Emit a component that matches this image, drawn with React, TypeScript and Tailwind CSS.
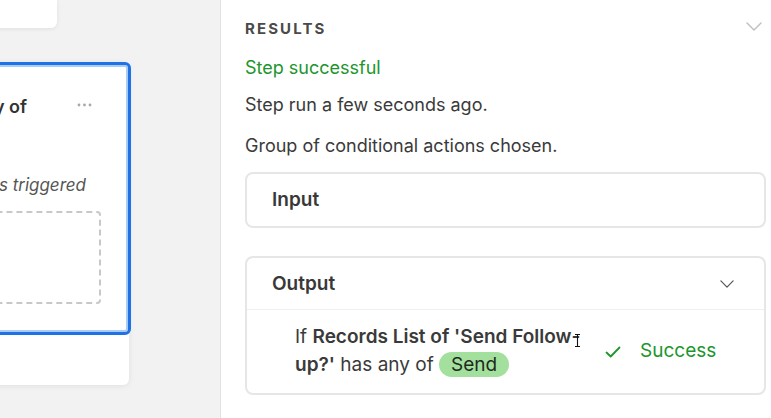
import React from 'react';

const Chevron = ({ className }: { className?: string }) => (
    <svg viewBox="0 0 16 9" className={className} fill="none" stroke="currentColor" strokeWidth={1.4} strokeLinecap="round" strokeLinejoin="round">
        <path d="M1 1l7 7 7-7" />
    </svg>
);

const Check = () => (
    <svg viewBox="0 0 16 12" className="w-[16px] h-[12px] text-[#20952d]" fill="none" stroke="currentColor" strokeWidth={1.8} strokeLinecap="round" strokeLinejoin="round">
        <path d="M1.5 6.5l4.2 4L14.5 1.5" />
    </svg>
);

const Dots = () => (
    <svg viewBox="0 0 15 4" className="w-[15px] h-[4px]">
        <circle cx="2" cy="2" r="1.4" fill="#a8a8a8" />
        <circle cx="7.5" cy="2" r="1.4" fill="#a8a8a8" />
        <circle cx="13" cy="2" r="1.4" fill="#a8a8a8" />
    </svg>
);

// Canvas side (card is mostly scrolled off to the left)
const Canvas = () => (
    <div className="w-[220px] shrink-0 bg-[#f2f2f2] overflow-hidden">
        <div className="ml-[-200px] w-[257px] h-[28px] bg-white rounded-br-[6px] shadow-[0_1px_4px_rgba(0,0,0,0.08)]" />

        <div className="ml-[-200px] mt-[34px] w-[329px] rounded-[6px] bg-white shadow-[0_1px_6px_rgba(0,0,0,0.08)]">
            <div className="w-[331px] h-[273px] rounded-[6px] border-[3px] border-[#1f72e6] shadow-[inset_0_0_0_2px_#a9cbf7] bg-white flex flex-col">
                <div className="flex items-start pt-[30px] pr-[36px]">
                    <div className="flex-1 text-right whitespace-nowrap text-[18px] leading-[24px] font-semibold text-[#333]">
                        Send a copy of
                    </div>
                    <div className="ml-[50px] pt-[8px]">
                        <Dots />
                    </div>
                </div>
                <div className="mt-[54px] pr-[42px] text-right whitespace-nowrap text-[17px] leading-[24px] italic text-[#555]">
                    When record is triggered
                </div>
                <div className="mt-[14px] mr-[27px] h-[93px] rounded-[4px] border-2 border-dashed border-[#c8c8c8]" />
            </div>
            <div className="h-[50px]" />
        </div>
    </div>
);

export default function App() {
    return (
        <div className="w-[771px] h-[418px] flex overflow-hidden bg-white font-['Inter',sans-serif]">
            <Canvas />

            <div className="flex-1 border-l border-[#e2e2e2] bg-white pl-[24px] pr-[5px]">
                {/* Results header */}
                <div className="flex items-center justify-between h-[58px] pr-[4px]">
                    <span className="text-[15px] font-bold tracking-[0.14em] text-[#4a4a4a]">RESULTS</span>
                    <Chevron className="w-[16px] h-[9px] text-[#bdbdbd] mt-[-6px]" />
                </div>

                <div className="text-[18px] leading-[20px] text-[#20952d]">Step successful</div>
                <div className="text-[18px] leading-[20px] text-[#3a3a3a] mt-[17px]">Step run a few seconds ago.</div>
                <div className="text-[18px] leading-[20px] text-[#3a3a3a] mt-[21px]">Group of conditional actions chosen.</div>

                {/* Input */}
                <div className="mt-[16px] h-[56px] rounded-[8px] border-2 border-[#e6e6e6] flex items-center pl-[25px]">
                    <span className="text-[19px] font-semibold text-[#383838]">Input</span>
                </div>

                {/* Output */}
                <div className="mt-[28px] rounded-[8px] border-2 border-[#e6e6e6]">
                    <div className="h-[52px] flex items-center justify-between pl-[25px] pr-[30px] border-b border-[#efefef]">
                        <span className="text-[19px] font-semibold text-[#383838] mt-[2px]">Output</span>
                        <Chevron className="w-[14px] h-[8px] text-[#555]" />
                    </div>
                    <div className="h-[83px] flex items-center pl-[48px]">
                        <div className="relative w-[290px] text-[19px] leading-[28px] text-[#3a3a3a] mt-[-2px]">
                            If <span className="font-semibold">Records List of 'Send Follow-</span>
                            <br />
                            <span className="font-semibold">up?'</span> has any of{' '}
                            <span className="inline-block rounded-full bg-[#a3e09d] px-[12px] leading-[25px] text-[#1f2a1f]">Send</span>
                            <svg viewBox="0 0 7 14" className="absolute left-[279px] top-[10px] w-[7px] h-[15px]" fill="none" stroke="#111" strokeWidth={1.1}>
                                <path d="M1 1h5M3.5 1v12M1 13h5" />
                            </svg>
                        </div>
                        <div className="flex items-center gap-[19px] ml-[20px]">
                            <Check />
                            <span className="text-[19px] text-[#20952d]">Success</span>
                        </div>
                    </div>
                </div>
            </div>
        </div>
    );
}
